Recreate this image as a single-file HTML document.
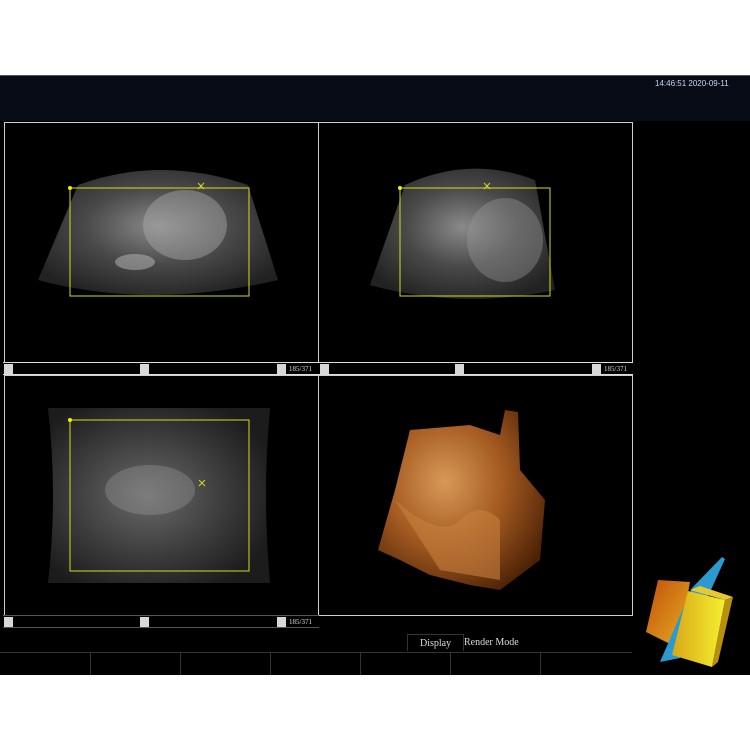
<!DOCTYPE html>
<html><head><meta charset="utf-8"><style>
*{margin:0;padding:0;box-sizing:border-box}
body{width:750px;height:750px;background:#fff;position:relative;overflow:hidden;font-family:"Liberation Sans",sans-serif}
.abs{position:absolute}
.panel{position:absolute;border:1px solid #cfcfcf;background:#000}
.sb{position:absolute;height:13px;border-top:1px solid #ddd;border-bottom:1px solid #ddd;background:#000}
.btn{position:absolute;top:1px;width:9px;height:10px;background:#d8d8d8}
.lbl{position:absolute;color:#ddd;font-size:7px;font-family:"Liberation Serif",serif;top:2px}
</style></head><body>
<div class="abs" style="left:0;top:75px;width:750px;height:600px;background:#000"></div>
<div class="abs" style="left:0;top:75px;width:750px;height:46px;background:#080c16;border-top:1px solid #555"></div>
<div class="abs" style="left:655px;top:79px;color:#c8d8f0;font-size:8px;font-family:'Liberation Sans Narrow','Liberation Sans',sans-serif">14:46:51 2020-09-11</div>

<svg class="abs" style="left:0;top:0" width="750" height="750">
<defs>
<radialGradient id="g1" cx="0.5" cy="0.45" r="0.6"><stop offset="0" stop-color="#8a8a8a"/><stop offset="0.5" stop-color="#4a4a4a"/><stop offset="1" stop-color="#222"/></radialGradient>
<radialGradient id="g2" cx="0.45" cy="0.5" r="0.6"><stop offset="0" stop-color="#6a6a6a"/><stop offset="0.6" stop-color="#3a3a3a"/><stop offset="1" stop-color="#1c1c1c"/></radialGradient>
<radialGradient id="g3" cx="0.4" cy="0.4" r="0.7"><stop offset="0" stop-color="#d89858"/><stop offset="0.5" stop-color="#a45a20"/><stop offset="1" stop-color="#4a2006"/></radialGradient>
<linearGradient id="c1" x1="0" y1="0" x2="1" y2="1"><stop offset="0" stop-color="#c0500c"/><stop offset="1" stop-color="#e8b020"/></linearGradient>
<linearGradient id="c2" x1="0" y1="0" x2="1" y2="0"><stop offset="0" stop-color="#d8a818"/><stop offset="1" stop-color="#f4f030"/></linearGradient>
</defs>
<path d="M78 185 Q160 155 248 185 L278 280 Q150 310 38 280 Z" fill="url(#g1)"/>
<ellipse cx="185" cy="225" rx="42" ry="35" fill="#aaa" opacity="0.45"/>
<ellipse cx="135" cy="262" rx="20" ry="8" fill="#bbb" opacity="0.5"/>
<path d="M405 185 Q470 155 535 180 L555 290 Q460 310 370 285 Z" fill="url(#g1)"/>
<ellipse cx="505" cy="240" rx="38" ry="42" fill="#999" opacity="0.4"/>
<path d="M48 408 L270 408 Q262 495 270 583 L48 583 Q58 495 48 408 Z" fill="url(#g2)"/>
<ellipse cx="150" cy="490" rx="45" ry="25" fill="#aaa" opacity="0.3"/>
<g fill="none" stroke="#d8d820" stroke-width="1">
<rect x="70" y="188" width="179" height="108"/>
<rect x="400" y="188" width="150" height="108"/>
<rect x="70" y="420" width="179" height="151"/>
<path d="M198 183l6 6M204 183l-6 6M484 183l6 6M490 183l-6 6M199 480l6 6M205 480l-6 6"/>
</g>
<circle cx="70" cy="188" r="2" fill="#ee0"/><circle cx="400" cy="188" r="2" fill="#ee0"/><circle cx="70" cy="420" r="2" fill="#ee0"/>
<path d="M410 430 L470 425 L500 435 L505 410 L518 412 L520 470 L545 500 L540 560 L520 575 L500 590 L470 585 L430 575 L400 560 L378 550 L395 490 Z" fill="url(#g3)"/>
<path d="M395 500 Q440 540 460 520 Q480 500 500 520 L500 580 L440 570 Z" fill="#c88040" opacity="0.6"/>
<!-- cube -->
<path d="M658 580 L690 582 L678 648 L646 632 Z" fill="url(#c1)"/>
<path d="M722 557 L725 559 L680 658 L660 662 L692 588 Z" fill="#2a9ad0"/>
<path d="M690 590 L700 586 L733 597 L725 600 Z" fill="#e8c830"/>
<path d="M688 591 L725 600 L712 667 L672 655 Z" fill="url(#c2)"/>
<path d="M725 600 L733 597 L718 662 L712 667 Z" fill="#b89010"/>
</svg>

<div class="panel" style="left:4px;top:122px;width:315px;height:241px;background:transparent"></div>
<div class="panel" style="left:318px;top:122px;width:315px;height:241px;background:transparent"></div>
<div class="panel" style="left:4px;top:375px;width:315px;height:241px;background:transparent"></div>
<div class="panel" style="left:318px;top:375px;width:315px;height:241px;background:transparent"></div>

<div class="sb" style="left:3px;top:362px;width:316px"><div class="btn" style="left:1px"></div><div class="btn" style="left:137px"></div><div class="btn" style="left:274px"></div><div class="lbl" style="left:286px">185/371</div></div>
<div class="sb" style="left:318px;top:362px;width:315px"><div class="btn" style="left:2px"></div><div class="btn" style="left:137px"></div><div class="btn" style="left:274px"></div><div class="lbl" style="left:286px">185/371</div></div>
<div class="sb" style="left:3px;top:615px;width:316px;border-color:#555"><div class="btn" style="left:1px"></div><div class="btn" style="left:137px"></div><div class="btn" style="left:274px"></div><div class="lbl" style="left:286px">185/371</div></div>

<div class="abs" style="left:407px;top:634px;width:57px;height:17px;border:1px solid #333;border-bottom:none;color:#ddd;font:10px 'Liberation Serif',serif;padding:3px 0 0 12px">Display</div>
<div class="abs" style="left:464px;top:634px;color:#ddd;font:10px 'Liberation Serif',serif;padding-top:3px">Render Mode</div>
<div class="abs" style="left:0;top:652px;width:632px;height:1px;background:#333"></div>
<div class="abs" style="left:90px;top:652px;width:1px;height:23px;background:#333"></div>
<div class="abs" style="left:180px;top:652px;width:1px;height:23px;background:#333"></div>
<div class="abs" style="left:270px;top:652px;width:1px;height:23px;background:#333"></div>
<div class="abs" style="left:360px;top:652px;width:1px;height:23px;background:#333"></div>
<div class="abs" style="left:450px;top:652px;width:1px;height:23px;background:#333"></div>
<div class="abs" style="left:540px;top:652px;width:1px;height:23px;background:#333"></div>
</body></html>
